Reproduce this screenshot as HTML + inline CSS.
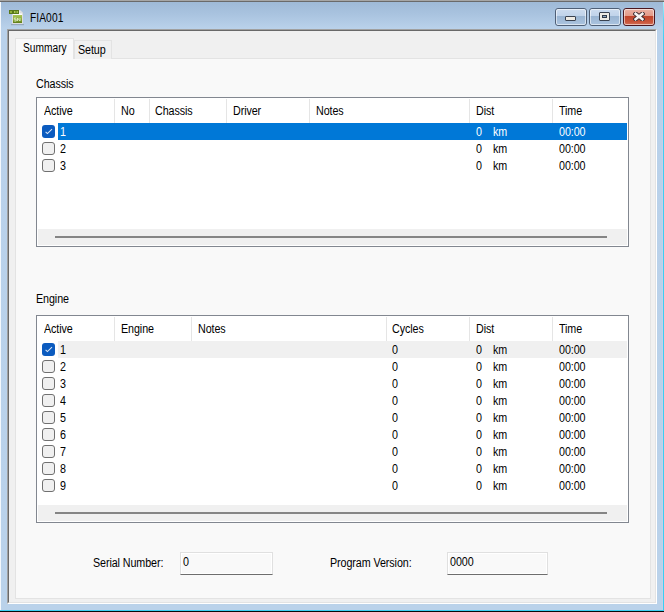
<!DOCTYPE html>
<html><head><meta charset="utf-8">
<style>
*{margin:0;padding:0;box-sizing:border-box}
html,body{width:664px;height:612px;overflow:hidden;background:#bad2ea}
body{position:relative;font-family:"Liberation Sans",sans-serif;font-size:10.5px;color:#000}
.a{position:absolute}
.t{position:absolute;white-space:nowrap;line-height:14px;font-size:12px;letter-spacing:-0.1px;transform:scaleX(0.895);transform-origin:0 0}
.win{left:0;top:0;width:664px;height:612px;background:linear-gradient(#9db8d6 0px,#a9c3df 14px,#b9d1ea 28px,#bad2ea 100%)}
.tbtn{position:absolute;top:8px;height:18px;border:1px solid #4f5f76;border-radius:3px;
  background:linear-gradient(#cddcef 0,#c0d3ea 7px,#99b4d2 7px,#a9c2de 15px,#b8cfe8 17px)}
.tbtn:after{content:"";position:absolute;left:0;top:0;right:0;bottom:0;border:1px solid rgba(255,255,255,.55);border-radius:2px}
.close{border-color:#4b1720;background:linear-gradient(#eab1a4 0,#e39a88 7px,#c0432a 7px,#c9563c 13px,#d77a63 17px)}
.frame{left:7px;top:29px;width:650px;height:575px;border-top:1px solid #a0a0a0;border-left:1px solid #a0a0a0;border-right:1px solid #fff;border-bottom:1px solid #fff}
.frame2{left:8px;top:30px;width:648px;height:573px;border-top:1px solid #696969;border-left:1px solid #696969;border-right:1px solid #e3e3e3;border-bottom:1px solid #e3e3e3;background:#f0f0f0}
.panel{left:15px;top:58px;width:636px;height:541px;border:1px solid #e3e3e3;background:#f9f9f9}
.lv{position:absolute;left:36px;width:593px;border:1px solid #828790;background:#fff}
.sep{position:absolute;top:1px;width:1px;height:24px;background:#e5e5e5}
.sb{position:absolute;left:1px;right:1px;height:16px;background:#f0f0f0}
.thumb{position:absolute;left:17px;width:552px;top:7px;height:2px;background:#858585}
.cb{position:absolute;left:5px;width:13px;height:13px;border:1px solid #707070;border-radius:3px;background:#f0f0f0}
.cb.on{border:none;background:#0b5bbf}
.cb.on svg{position:absolute;left:0;top:0}
.row{position:absolute;left:0;width:591px;height:17px}
.tb{position:absolute;top:552px;height:23px;border:1px solid #e0e0e0;border-bottom:1px solid #6e6e6e;background:#f9f9f9;box-shadow:inset 0 0 0 1px #fff}
</style></head><body>
<div class="a win"></div>
<div class="a" style="left:0;top:0;width:664px;height:1px;background:#a6a6a6"></div>
<div class="a" style="left:0;top:1px;width:664px;height:1px;background:#6a6a6a"></div>
<div class="a" style="left:0;top:2px;width:1px;height:608px;background:#f4f8fc"></div>
<div class="a" style="left:663px;top:2px;width:1px;height:608px;background:linear-gradient(#b0f2fc 0,#5cd6f4 18px,#3ccff3 40px,#38cff3 100%)"></div>
<div class="a" style="left:662px;top:40px;width:1px;height:570px;background:#c6d0ea"></div>
<div class="a" style="left:0;top:610px;width:664px;height:1px;background:#3ccff2"></div>
<div class="a" style="left:0;top:611px;width:664px;height:1px;background:#0a0a0a"></div>

<!-- icon -->
<svg class="a" style="left:8px;top:9px" width="18" height="18" viewBox="0 0 18 18">
  <defs><linearGradient id="ig" x1="0" y1="0" x2="0" y2="1"><stop offset="0" stop-color="#a9c65a"/><stop offset=".6" stop-color="#89a838"/><stop offset="1" stop-color="#5d7c18"/></linearGradient></defs>
  <rect x="3" y="15" width="13" height="1.2" fill="#7d8b99" opacity=".55"/>
  <path d="M4.5 1.5 H12 L14.5 4 V14.5 H4.5 Z" fill="#fbfbfb" stroke="#dedede" stroke-width="1"/>
  <path d="M12 1.5 V4 H14.5" fill="#e8e8e8" stroke="#d0d0d0" stroke-width=".6"/>
  <rect x="1" y="1" width="10" height="4" fill="#58781a"/>
  <rect x="2" y="2" width="2" height="2" fill="#8fae3a"/><rect x="6" y="2" width="1.5" height="2" fill="#a8c850"/><rect x="8.5" y="2" width="1.5" height="2" fill="#9fbf48"/>
  <rect x="5" y="6" width="9" height="8" fill="url(#ig)"/>
  <path d="M6.3 9 H8.2 M6.3 9 V10.3 H8.2 V12 H6.3 M9.5 12 V9 L12 12 V9" fill="none" stroke="#e4eec8" stroke-width="1" opacity=".85"/>
</svg>
<div class="t" style="left:30px;top:11px;letter-spacing:0.1px;transform:scaleX(0.85)">FIA001</div>

<!-- title buttons -->
<div class="tbtn" style="left:555px;width:32px"><div class="a" style="left:9px;top:7px;width:11px;height:5px;border:1px solid #3a4250;border-radius:1px;background:#eeebe4"></div></div>
<div class="tbtn" style="left:589px;width:32px"><div class="a" style="left:9px;top:3px;width:11px;height:9px;border:1px solid #3a4250;border-radius:1px;background:#eeebe4"><div class="a" style="left:2px;top:2px;width:5px;height:3px;border:1px solid #333a45;background:#8ea8c4"></div></div></div>
<div class="tbtn close" style="left:623px;width:32px">
<svg class="a" style="left:9px;top:3px" width="12" height="9" viewBox="0 0 12 9"><path d="M2.6 1.8 L9.4 7.2 M9.4 1.8 L2.6 7.2" stroke="#3a2c30" stroke-width="4.4" stroke-linecap="square"/><path d="M2.6 1.8 L9.4 7.2 M9.4 1.8 L2.6 7.2" stroke="#f6f3f2" stroke-width="2.6" stroke-linecap="square"/></svg>
</div>

<!-- client frame -->
<div class="a frame"></div>
<div class="a frame2"></div>

<!-- tabs -->
<div class="a panel"></div>
<div class="a" style="left:74px;top:40px;width:38px;height:19px;border:1px solid #e3e3e3;border-bottom:none;background:#f0f0f0"></div>
<div class="a" style="left:15px;top:38px;width:59px;height:21px;border:1px solid #e3e3e3;border-bottom:none;background:#f9f9f9"></div>
<div class="t" style="left:23px;top:41px;letter-spacing:0;transform:scaleX(0.85)">Summary</div>
<div class="t" style="left:78px;top:43px">Setup</div>

<div class="t" style="left:36px;top:77px">Chassis</div>

<!-- chassis listview -->
<div class="lv" style="top:97px;height:150px">
  <div class="sep" style="left:77px"></div>
  <div class="sep" style="left:112px"></div>
  <div class="sep" style="left:189px"></div>
  <div class="sep" style="left:272px"></div>
  <div class="sep" style="left:432px"></div>
  <div class="sep" style="left:515px"></div>
  <div class="t" style="left:7px;top:6px">Active</div>
  <div class="t" style="left:84px;top:6px">No</div>
  <div class="t" style="left:118px;top:6px">Chassis</div>
  <div class="t" style="left:196px;top:6px">Driver</div>
  <div class="t" style="left:279px;top:6px">Notes</div>
  <div class="t" style="left:439px;top:6px">Dist</div>
  <div class="t" style="left:522px;top:6px">Time</div>
  <div id="crows">
  <div class="row" style="top:25px"><div class="a" style="left:21px;top:0;width:569px;height:17px;background:#0078d7"></div><div class="cb on" style="top:2px"><svg width="13" height="13" viewBox="0 0 13 13"><path d="M3.6 6.8 L5.4 8.6 L10 4.1" fill="none" stroke="#fff" stroke-opacity=".85" stroke-width="1.05"/></svg></div><div class="t" style="left:23px;top:2px;color:#fff;">1</div><div class="t" style="left:439px;top:2px;color:#fff;">0</div><div class="t" style="left:456px;top:2px;color:#fff;">km</div><div class="t" style="left:522px;top:2px;color:#fff;">00:00</div></div>
  <div class="row" style="top:42px"><div class="cb" style="top:2px"></div><div class="t" style="left:23px;top:2px;">2</div><div class="t" style="left:439px;top:2px;">0</div><div class="t" style="left:456px;top:2px;">km</div><div class="t" style="left:522px;top:2px;">00:00</div></div>
  <div class="row" style="top:59px"><div class="cb" style="top:2px"></div><div class="t" style="left:23px;top:2px;">3</div><div class="t" style="left:439px;top:2px;">0</div><div class="t" style="left:456px;top:2px;">km</div><div class="t" style="left:522px;top:2px;">00:00</div></div>
  </div>
  <div class="sb" style="top:131px"><div class="thumb"></div></div>
</div>

<div class="t" style="left:36px;top:292px">Engine</div>

<!-- engine listview -->
<div class="lv" style="top:315px;height:208px">
  <div class="sep" style="left:77px"></div>
  <div class="sep" style="left:154px"></div>
  <div class="sep" style="left:349px"></div>
  <div class="sep" style="left:432px"></div>
  <div class="sep" style="left:515px"></div>
  <div class="t" style="left:7px;top:6px">Active</div>
  <div class="t" style="left:84px;top:6px">Engine</div>
  <div class="t" style="left:161px;top:6px">Notes</div>
  <div class="t" style="left:355px;top:6px">Cycles</div>
  <div class="t" style="left:439px;top:6px">Dist</div>
  <div class="t" style="left:522px;top:6px">Time</div>
  <div id="erows">
  <div class="row" style="top:25px"><div class="a" style="left:21px;top:0;width:569px;height:17px;background:#f0f0f0"></div><div class="cb on" style="top:2px"><svg width="13" height="13" viewBox="0 0 13 13"><path d="M3.6 6.8 L5.4 8.6 L10 4.1" fill="none" stroke="#fff" stroke-opacity=".85" stroke-width="1.05"/></svg></div><div class="t" style="left:23px;top:2px;">1</div><div class="t" style="left:355px;top:2px;">0</div><div class="t" style="left:439px;top:2px;">0</div><div class="t" style="left:456px;top:2px;">km</div><div class="t" style="left:522px;top:2px;">00:00</div></div>
  <div class="row" style="top:42px"><div class="cb" style="top:2px"></div><div class="t" style="left:23px;top:2px;">2</div><div class="t" style="left:355px;top:2px;">0</div><div class="t" style="left:439px;top:2px;">0</div><div class="t" style="left:456px;top:2px;">km</div><div class="t" style="left:522px;top:2px;">00:00</div></div>
  <div class="row" style="top:59px"><div class="cb" style="top:2px"></div><div class="t" style="left:23px;top:2px;">3</div><div class="t" style="left:355px;top:2px;">0</div><div class="t" style="left:439px;top:2px;">0</div><div class="t" style="left:456px;top:2px;">km</div><div class="t" style="left:522px;top:2px;">00:00</div></div>
  <div class="row" style="top:76px"><div class="cb" style="top:2px"></div><div class="t" style="left:23px;top:2px;">4</div><div class="t" style="left:355px;top:2px;">0</div><div class="t" style="left:439px;top:2px;">0</div><div class="t" style="left:456px;top:2px;">km</div><div class="t" style="left:522px;top:2px;">00:00</div></div>
  <div class="row" style="top:93px"><div class="cb" style="top:2px"></div><div class="t" style="left:23px;top:2px;">5</div><div class="t" style="left:355px;top:2px;">0</div><div class="t" style="left:439px;top:2px;">0</div><div class="t" style="left:456px;top:2px;">km</div><div class="t" style="left:522px;top:2px;">00:00</div></div>
  <div class="row" style="top:110px"><div class="cb" style="top:2px"></div><div class="t" style="left:23px;top:2px;">6</div><div class="t" style="left:355px;top:2px;">0</div><div class="t" style="left:439px;top:2px;">0</div><div class="t" style="left:456px;top:2px;">km</div><div class="t" style="left:522px;top:2px;">00:00</div></div>
  <div class="row" style="top:127px"><div class="cb" style="top:2px"></div><div class="t" style="left:23px;top:2px;">7</div><div class="t" style="left:355px;top:2px;">0</div><div class="t" style="left:439px;top:2px;">0</div><div class="t" style="left:456px;top:2px;">km</div><div class="t" style="left:522px;top:2px;">00:00</div></div>
  <div class="row" style="top:144px"><div class="cb" style="top:2px"></div><div class="t" style="left:23px;top:2px;">8</div><div class="t" style="left:355px;top:2px;">0</div><div class="t" style="left:439px;top:2px;">0</div><div class="t" style="left:456px;top:2px;">km</div><div class="t" style="left:522px;top:2px;">00:00</div></div>
  <div class="row" style="top:161px"><div class="cb" style="top:2px"></div><div class="t" style="left:23px;top:2px;">9</div><div class="t" style="left:355px;top:2px;">0</div><div class="t" style="left:439px;top:2px;">0</div><div class="t" style="left:456px;top:2px;">km</div><div class="t" style="left:522px;top:2px;">00:00</div></div>
  </div>
  <div class="sb" style="top:189px"><div class="thumb"></div></div>
</div>

<div class="t" style="left:93px;top:556px">Serial Number:</div>
<div class="tb" style="left:180px;width:93px"><div class="t" style="left:2px;top:2px">0</div></div>
<div class="t" style="left:330px;top:556px">Program Version:</div>
<div class="tb" style="left:447px;width:101px"><div class="t" style="left:2px;top:2px">0000</div></div>
</body></html>
